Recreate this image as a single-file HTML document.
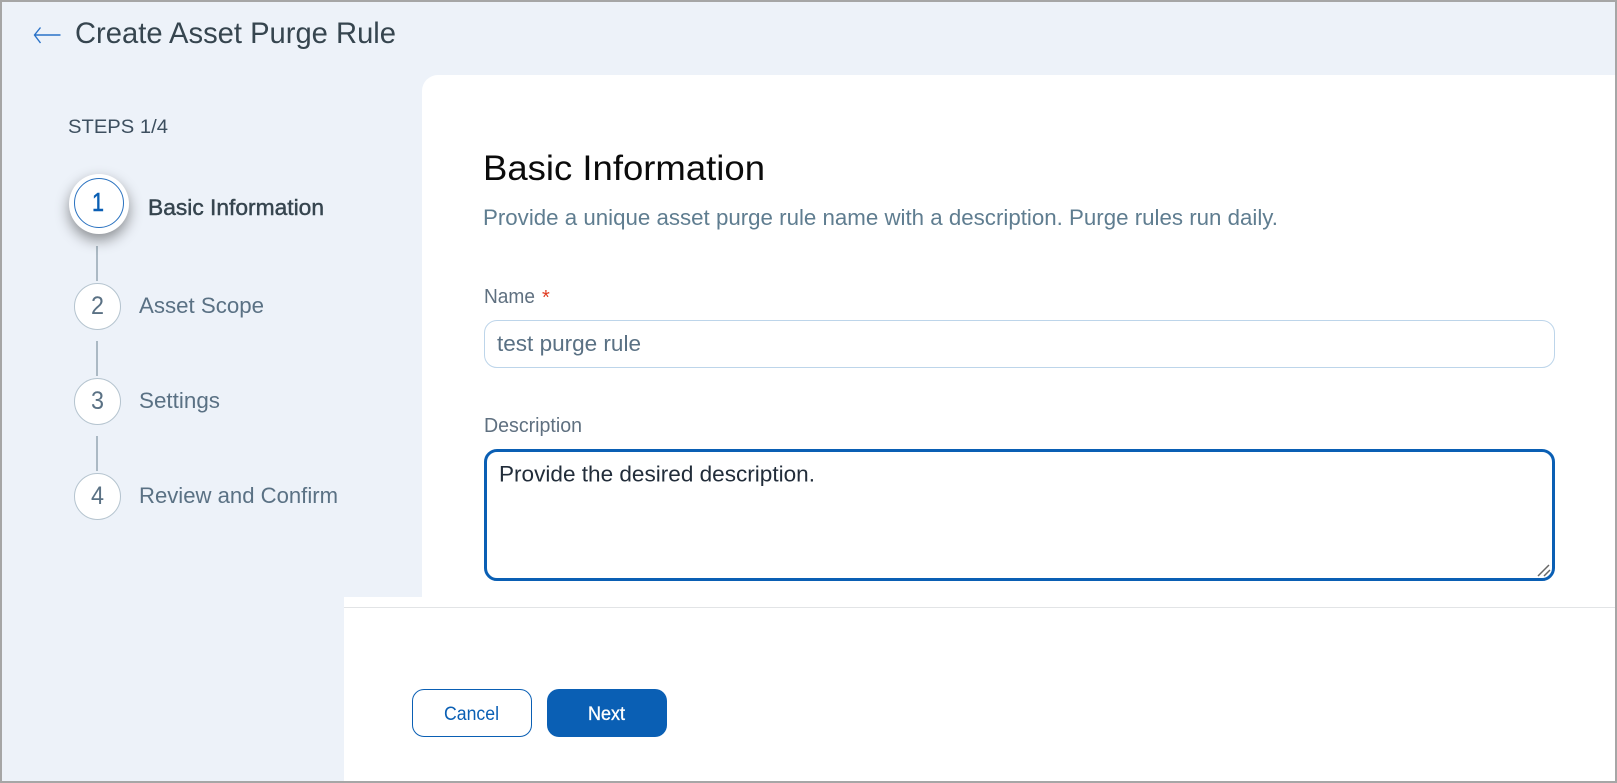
<!DOCTYPE html>
<html lang="en"><head><meta charset="utf-8"><title>Create Asset Purge Rule</title>
<style>
html,body{margin:0;padding:0}
body{width:1617px;height:783px;overflow:hidden;background:#edf2f9;position:relative;font-family:"Liberation Sans",sans-serif}
.b{position:absolute;box-sizing:border-box}
svg{position:absolute;left:0;top:0}
text{font-family:"Liberation Sans",sans-serif}
</style></head><body>
<div class="b" style="left:422px;top:75px;width:1195px;height:522px;background:#fff;border-radius:16px 0 0 0"></div>
<div class="b" style="left:344px;top:597px;width:1273px;height:186px;background:#fff"></div>
<div class="b" style="left:344px;top:607px;width:1273px;height:1px;background:#e2e4e6"></div>
<div class="b" style="left:484px;top:320px;width:1071px;height:48px;border:1px solid #bdd5ea;border-radius:13px;background:#fff"></div>
<div class="b" style="left:484px;top:449px;width:1071px;height:132px;border:3px solid #0a5fb4;border-radius:13px;background:#fff"></div>
<div class="b" style="left:412px;top:689px;width:120px;height:48px;border:1px solid #0a5fb4;border-radius:12px;background:#fff"></div>
<div class="b" style="left:547px;top:689px;width:120px;height:48px;border-radius:12px;background:#0a5fb4"></div>
<div class="b" style="left:96px;top:246px;width:2px;height:35px;background:#abb9c4"></div>
<div class="b" style="left:96px;top:341px;width:2px;height:35px;background:#abb9c4"></div>
<div class="b" style="left:96px;top:436px;width:2px;height:35px;background:#abb9c4"></div>
<div class="b" style="left:69px;top:174px;width:60px;height:60px;border-radius:50%;background:#fff;box-shadow:0 6px 14px rgba(0,0,0,.42)"></div>
<div class="b" style="left:74px;top:178px;width:50px;height:50px;border-radius:50%;border:1px solid #2a72c0;background:#fff"></div>
<div class="b" style="left:74px;top:283px;width:47px;height:47px;border-radius:50%;border:1px solid #b5c4cf;background:#fff"></div>
<div class="b" style="left:74px;top:378px;width:47px;height:47px;border-radius:50%;border:1px solid #b5c4cf;background:#fff"></div>
<div class="b" style="left:74px;top:473px;width:47px;height:47px;border-radius:50%;border:1px solid #b5c4cf;background:#fff"></div>
<svg width="1617" height="783" viewBox="0 0 1617 783">
<path d="M60.5 35H34.5M40.5 27.5L34.5 35L40.5 43" fill="none" stroke="#2a72c8" stroke-width="1.4"/>
<path d="M1538 576L1549 565M1544 576L1550 570" fill="none" stroke="#666" stroke-width="1.5"/>
<text x="75" y="43" font-size="30" fill="#36454f" textLength="321" lengthAdjust="spacingAndGlyphs">Create Asset Purge Rule</text>
<text x="68" y="133" font-size="19.5" fill="#3d4f5f" textLength="100" lengthAdjust="spacingAndGlyphs">STEPS 1/4</text>
<text x="92" y="211" font-size="26" fill="#0a5fb4" stroke="#0a5fb4" stroke-width=".5" textLength="12" lengthAdjust="spacingAndGlyphs">1</text>
<text x="148" y="215" font-size="22.5" fill="#36454f" stroke="#36454f" stroke-width=".45" textLength="176" lengthAdjust="spacingAndGlyphs">Basic Information</text>
<text x="91" y="314" font-size="25" fill="#5a7184" textLength="13" lengthAdjust="spacingAndGlyphs">2</text>
<text x="139" y="313" font-size="22.5" fill="#5a7184" textLength="125" lengthAdjust="spacingAndGlyphs">Asset Scope</text>
<text x="91" y="409" font-size="25" fill="#5a7184" textLength="13" lengthAdjust="spacingAndGlyphs">3</text>
<text x="139" y="408" font-size="22.5" fill="#5a7184" textLength="81" lengthAdjust="spacingAndGlyphs">Settings</text>
<text x="91" y="504" font-size="25" fill="#5a7184" textLength="13" lengthAdjust="spacingAndGlyphs">4</text>
<text x="139" y="503" font-size="22.5" fill="#5a7184" textLength="199" lengthAdjust="spacingAndGlyphs">Review and Confirm</text>
<text x="483" y="180" font-size="35.5" fill="#0b0b0b" textLength="282" lengthAdjust="spacingAndGlyphs">Basic Information</text>
<text x="483" y="225" font-size="22" fill="#5f7d90" textLength="795" lengthAdjust="spacingAndGlyphs">Provide a unique asset purge rule name with a description. Purge rules run daily.</text>
<text x="484" y="303" font-size="20" fill="#5f7080" textLength="51" lengthAdjust="spacingAndGlyphs">Name</text>
<text x="542" y="304" font-size="20" fill="#e03a20">*</text>
<text x="497" y="351" font-size="22.5" fill="#5a7184" textLength="144" lengthAdjust="spacingAndGlyphs">test purge rule</text>
<text x="484" y="432" font-size="20" fill="#5f7080" textLength="98" lengthAdjust="spacingAndGlyphs">Description</text>
<text x="499" y="481.500" font-size="22.5" fill="#222d3a" textLength="316" lengthAdjust="spacingAndGlyphs">Provide the desired description.</text>
<text x="444" y="720" font-size="19" fill="#0a5fb4" textLength="55" lengthAdjust="spacingAndGlyphs">Cancel</text>
<text x="588" y="720" font-size="19" fill="#fff" stroke="#fff" stroke-width=".35" textLength="37" lengthAdjust="spacingAndGlyphs">Next</text>
</svg>
<div class="b" style="left:0;top:0;width:1617px;height:783px;border:solid #a6a6a6;border-width:2px;pointer-events:none"></div>
</body></html>
